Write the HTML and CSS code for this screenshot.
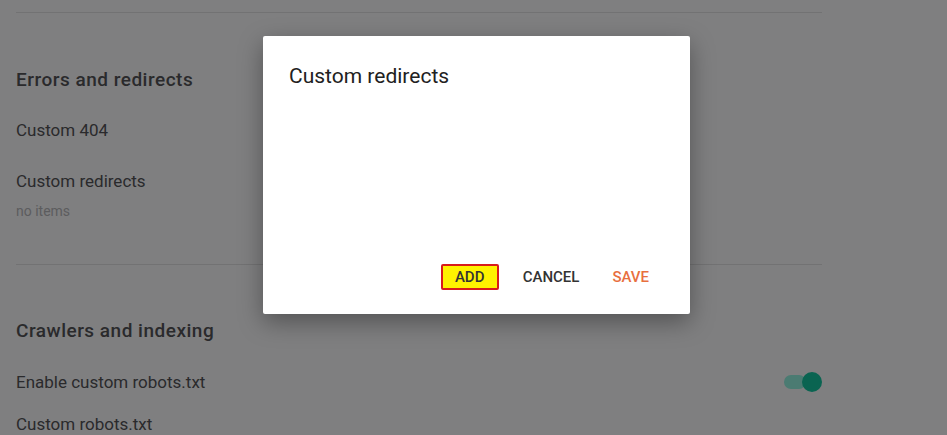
FILE: index.html
```html
<!DOCTYPE html>
<html>
<head>
  <title>Settings</title>
  <link rel="stylesheet" href="styles.css">
</head>
<body>
  <div class="settings">
    <hr class="divider">

    <section class="group">
      <h2>Errors and redirects</h2>
      <div class="row">Custom 404</div>
      <div class="row row-sub">Custom redirects</div>
      <div class="hint">no items</div>
    </section>

    <hr class="divider">

    <section class="group">
      <h2>Crawlers and indexing</h2>
      <div class="row row-toggle">
        <span>Enable custom robots.txt</span>
        <span class="toggle"><span class="knob"></span></span>
      </div>
      <div class="row row-last">Custom robots.txt</div>
    </section>
  </div>

  <div class="dialog">
    <h3>Custom redirects</h3>
    <div class="dialog-body"></div>
    <div class="dialog-actions">
      <button class="btn btn-add">ADD</button>
      <button class="btn">CANCEL</button>
      <button class="btn btn-save">SAVE</button>
    </div>
  </div>
</body>
</html>
```

FILE: styles.css
```css
body {
  margin: 0;
  background-color: #7f7f80;
  font-family: Roboto, "Liberation Sans", Arial, sans-serif;
  color: #2a2a2c;
  height: 435px;
  overflow: hidden;
}

.settings {
  width: 806px;
  padding: 12px 0 0 16px;
}

.divider {
  margin: 0;
  border: none;
  border-top: 1px solid #727273;
}

.group h2 {
  margin: 0;
  font-size: 19px;
  font-weight: 500;
  letter-spacing: 0.5px;
  line-height: 24px;
}

.group:first-of-type {
  padding: 55px 0 45px;
}

.group + .divider + .group {
  padding-top: 54px;
}

.row {
  font-size: 17px;
  line-height: 20px;
  margin-top: 28px;
}

.row-sub {
  margin-top: 31px;
}

.hint {
  font-size: 14px;
  color: #5c5c5e;
  margin-top: 12px;
  line-height: 16px;
}

.row-toggle {
  display: flex;
  justify-content: space-between;
  align-items: center;
  margin-top: 29px;
}

.row-last {
  margin-top: 22px;
}

.toggle {
  position: relative;
  width: 22px;
  height: 14px;
  border-radius: 7px;
  background-color: #4b7b72;
  margin-right: 16px;
}

.knob {
  position: absolute;
  left: 18px;
  top: -3px;
  width: 20px;
  height: 20px;
  border-radius: 50%;
  background-color: #0a6451;
}

.dialog {
  position: absolute;
  left: 263px;
  top: 36px;
  width: 427px;
  height: 278px;
  box-sizing: border-box;
  background-color: #fff;
  border-radius: 2px;
  box-shadow: 0 8px 24px rgba(0, 0, 0, 0.35);
  padding: 28px 26px 0 26px;
  display: flex;
  flex-direction: column;
}

.dialog h3 {
  margin: 0;
  font-size: 21px;
  font-weight: 400;
  color: #212121;
  line-height: 24px;
}

.dialog-body {
  flex: 1;
}

.dialog-actions {
  display: flex;
  justify-content: flex-end;
  align-items: center;
  gap: 24px;
  padding: 0 15px 24px 0;
}

.btn {
  border: none;
  background: none;
  font-family: Roboto, "Liberation Sans", Arial, sans-serif;
  font-size: 15px;
  font-weight: 500;
  color: #333;
  padding: 0;
  height: 26px;
  cursor: pointer;
}

.btn-add {
  width: 58px;
  background-color: #fff200;
  border: 2px solid #d81b1b;
  border-radius: 2px;
  box-sizing: border-box;
  color: #333;
}

.btn-save {
  color: #e8703f;
  margin-left: 9px;
}
```
